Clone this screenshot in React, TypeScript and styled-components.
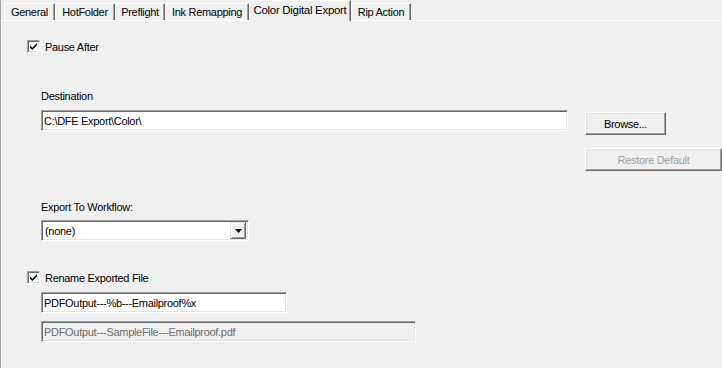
import styled, { createGlobalStyle } from 'styled-components';

const GlobalStyle = createGlobalStyle`
  body {
    margin: 0;
    background: #f0f0f0;
    font-family: "Liberation Sans", Arial, sans-serif;
    font-size: 11px;
    letter-spacing: -0.3px;
    color: #000;
  }
`;

const tabs = [
  { label: 'General', width: 51 },
  { label: 'HotFolder', width: 60 },
  { label: 'Preflight', width: 50 },
  { label: 'Ink Remapping', width: 84 },
  { label: 'Color Digital Export', width: 102, active: true },
  { label: 'Rip Action', width: 60 },
];

function CheckBox({ checked }: { checked?: boolean }) {
  return (
    <Box>
      {checked && (
        <svg width="9" height="9" viewBox="0 0 9 9">
          <path d="M1 3.5 L3.3 5.8 L8 1.1 L8 3.3 L3.3 8 L1 5.7 Z" fill="#000" />
        </svg>
      )}
    </Box>
  );
}

export default function App() {
  return (
    <Window>
      <GlobalStyle />
      <TabStrip>
        {tabs.map((t) => (
          <Tab key={t.label} $active={t.active} style={{ width: t.width }}>
            {t.label}
          </Tab>
        ))}
      </TabStrip>
      <Panel>
        <CheckRow style={{ marginTop: 19 }}>
          <CheckBox checked />
          Pause After
        </CheckRow>

        <Label style={{ marginTop: 37 }}>Destination</Label>
        <DestGrid>
          <TextBox $width={527}>C:\DFE Export\Color\</TextBox>
          <ButtonColumn>
            <Button $width={81}>Browse...</Button>
            <Button $width={137} disabled>
              Restore Default
            </Button>
          </ButtonColumn>
        </DestGrid>

        <Label style={{ marginTop: 30 }}>Export To Workflow:</Label>
        <Select>
          <SelectValue>(none)</SelectValue>
          <DropButton>
            <svg width="7" height="4" viewBox="0 0 7 4">
              <path d="M0 0 H7 L3.5 4 Z" fill="#000" />
            </svg>
          </DropButton>
        </Select>

        <CheckRow style={{ marginTop: 30 }}>
          <CheckBox checked />
          Rename Exported File
        </CheckRow>
        <TextBox $width={246} $inset style={{ marginTop: 8 }}>
          PDFOutput---%b---Emailproof%x
        </TextBox>
        <TextBox $width={375} $inset $disabled style={{ marginTop: 8 }}>
          PDFOutput---SampleFile---Emailproof.pdf
        </TextBox>
      </Panel>
    </Window>
  );
}

const Window = styled.div`
  width: 722px;
  height: 368px;
  overflow: hidden;
  background: #f0f0f0;
  display: flex;
  flex-direction: column;
`;

const TabStrip = styled.div`
  display: flex;
  align-items: flex-end;
  height: 20px;
  padding-left: 3px;
  border-left: 1px solid #a0a0a0;
  position: relative;
  z-index: 1;
`;

const Tab = styled.div<{ $active?: boolean }>`
  box-sizing: border-box;
  height: ${(p) => (p.$active ? '21px' : '17px')};
  margin-bottom: ${(p) => (p.$active ? '-1px' : '0')};
  padding-bottom: ${(p) => (p.$active ? '3px' : '0')};
  display: flex;
  align-items: center;
  justify-content: center;
  white-space: nowrap;
  background: #f0f0f0;
  border-top: 1px solid #fff;
  border-left: 1px solid #fff;
  border-right: 1px solid #696969;
  box-shadow: inset -1px 0 0 #a0a0a0;
  font-size: ${(p) => (p.$active ? '11.5px' : '11px')};
`;

const Panel = styled.div`
  flex: 1;
  display: flex;
  flex-direction: column;
  align-items: flex-start;
  padding-left: 26px;
  border-left: 1px solid #a0a0a0;
  border-top: 1px solid #fff;
  box-shadow: inset 1px 0 0 #fff;
`;

const CheckRow = styled.label`
  display: flex;
  align-items: center;
  gap: 5px;
  height: 13px;
`;

const Box = styled.span`
  box-sizing: border-box;
  width: 13px;
  height: 13px;
  display: flex;
  align-items: center;
  justify-content: center;
  background: #fff;
  border-top: 1px solid #a0a0a0;
  border-left: 1px solid #a0a0a0;
  border-bottom: 1px solid #fff;
  border-right: 1px solid #fff;
  box-shadow: inset 1px 1px 0 #696969, inset -1px -1px 0 #e3e3e3;
`;

const Label = styled.div`
  margin-left: 14px;
  line-height: 13px;
`;

const DestGrid = styled.div`
  display: grid;
  grid-template-columns: auto auto;
  column-gap: 17px;
  margin-top: 7px;
  margin-left: 14px;
  align-items: start;
`;

const sunken = `
  box-sizing: border-box;
  border-top: 1px solid #a0a0a0;
  border-left: 1px solid #a0a0a0;
  border-bottom: 1px solid #fff;
  border-right: 1px solid #fff;
  box-shadow: inset 1px 1px 0 #696969, inset -1px -1px 0 #e3e3e3;
`;

const TextBox = styled.div<{ $width: number; $inset?: boolean; $disabled?: boolean }>`
  ${sunken}
  width: ${(p) => p.$width}px;
  height: 21px;
  margin-left: ${(p) => (p.$inset ? 14 : 0)}px;
  padding: 0 2px;
  display: flex;
  align-items: center;
  white-space: nowrap;
  background: ${(p) => (p.$disabled ? '#f0f0f0' : '#fff')};
  color: ${(p) => (p.$disabled ? '#6d6d6d' : '#000')};
`;

const ButtonColumn = styled.div`
  display: flex;
  flex-direction: column;
  gap: 13px;
  margin-top: 2px;
`;

const Button = styled.button<{ $width: number }>`
  box-sizing: border-box;
  width: ${(p) => p.$width}px;
  height: 23px;
  padding: 0;
  background: #f0f0f0;
  font: inherit;
  letter-spacing: inherit;
  color: #000;
  border-top: 1px solid #fff;
  border-left: 1px solid #fff;
  border-bottom: 1px solid #696969;
  border-right: 1px solid #696969;
  box-shadow: inset -1px -1px 0 #a0a0a0, inset 1px 1px 0 #e3e3e3;
  &:disabled {
    color: #a0a0a0;
  }
`;

const Select = styled.div`
  ${sunken}
  width: 208px;
  height: 21px;
  margin-top: 6px;
  margin-left: 14px;
  display: flex;
  align-items: center;
  background: #fff;
  padding: 2px;
`;

const SelectValue = styled.div`
  flex: 1;
  padding-left: 1px;
`;

const DropButton = styled.div`
  box-sizing: border-box;
  width: 16px;
  height: 17px;
  display: flex;
  align-items: center;
  justify-content: center;
  background: #f0f0f0;
  border-top: 1px solid #e3e3e3;
  border-left: 1px solid #e3e3e3;
  border-bottom: 1px solid #696969;
  border-right: 1px solid #696969;
  box-shadow: inset 1px 1px 0 #fff, inset -1px -1px 0 #a0a0a0;
`;
